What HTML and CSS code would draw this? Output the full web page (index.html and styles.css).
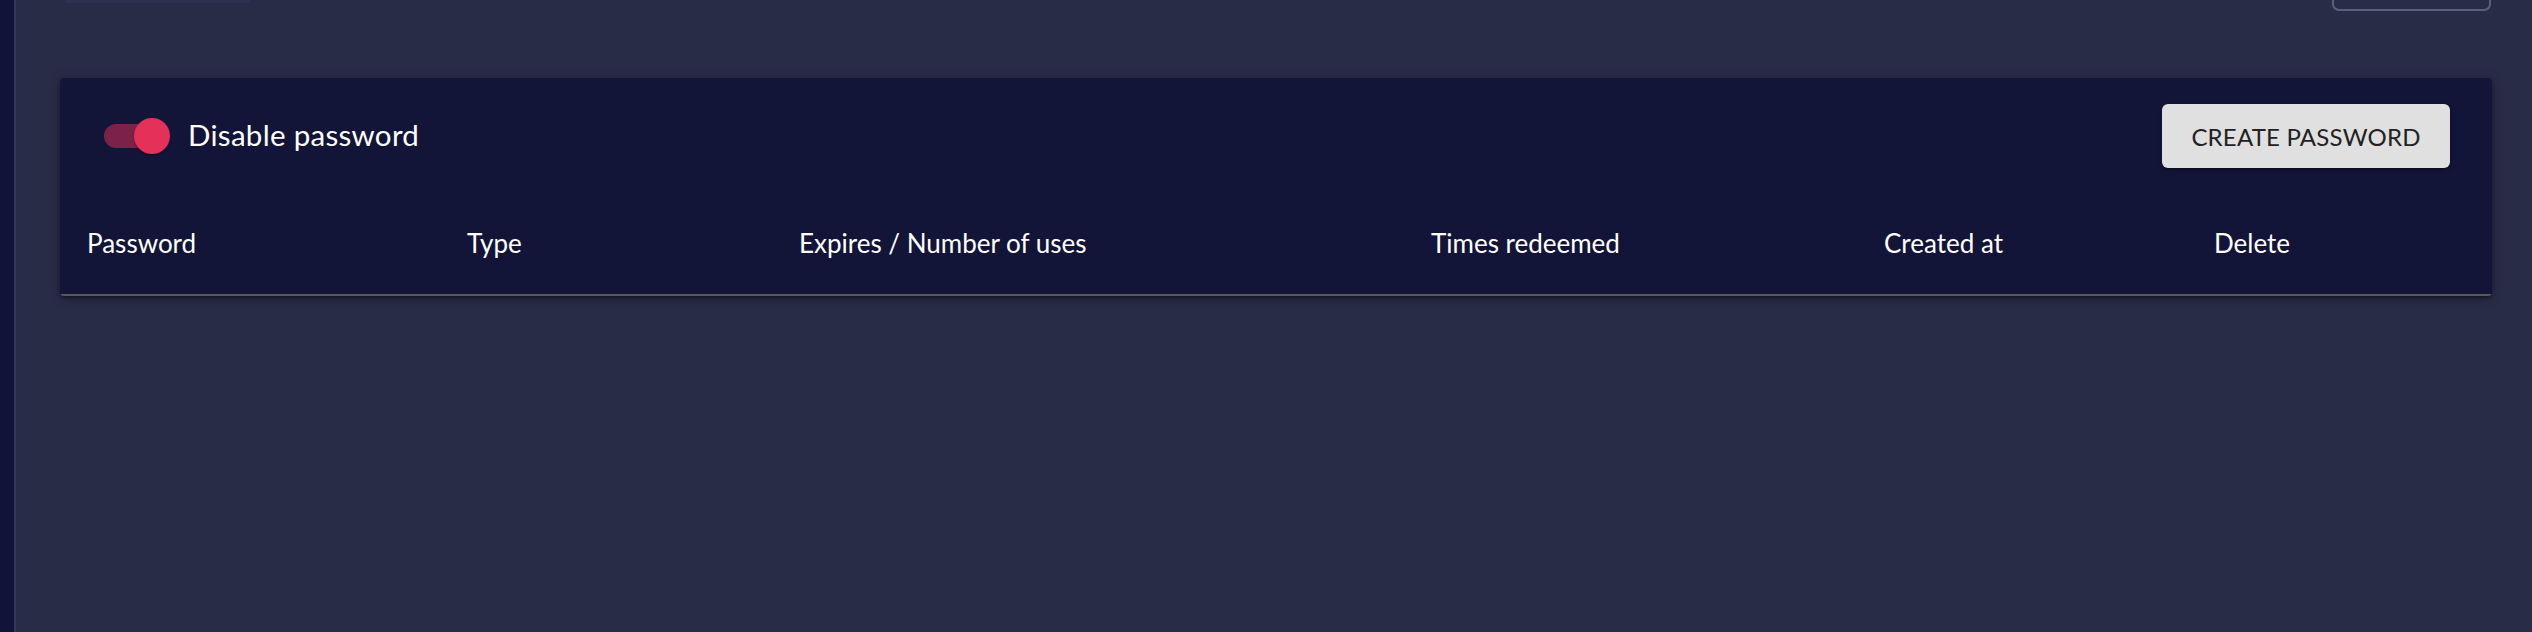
FILE: index.html
```html
<!DOCTYPE html>
<html lang="en">
<head>
<meta charset="utf-8">
<title>Passwords</title>
<link rel="stylesheet" href="styles.css">
</head>
<body>
<div class="app">
  <aside class="sidebar"></aside>
  <main class="main">
    <div class="topbar">
      <div class="title-remnant"></div>
      <div class="outline-btn"></div>
    </div>
    <section class="card">
      <div class="toolbar">
        <label class="switch-label">
          <span class="switch">
            <span class="track"></span>
            <span class="thumb"></span>
          </span>
          <span class="switch-text">Disable password</span>
        </label>
        <button class="create-btn" type="button">CREATE PASSWORD</button>
      </div>
      <div class="thead">
        <div class="th">Password</div>
        <div class="th">Type</div>
        <div class="th">Expires / Number of uses</div>
        <div class="th">Times redeemed</div>
        <div class="th">Created at</div>
        <div class="th">Delete</div>
      </div>
    </section>
  </main>
</div>
</body>
</html>
```

FILE: styles.css
```css
* { box-sizing: border-box; }
html, body {
  margin: 0;
  padding: 0;
  height: 100%;
  background: #292c47;
  font-family: Lato, "Open Sans", "Liberation Sans", sans-serif;
  color: #ffffff;
}
.app {
  display: flex;
  height: 632px;
  overflow: hidden;
}
.sidebar {
  width: 16px;
  flex: 0 0 16px;
  background: #111438;
  border-right: 2px solid #34375a;
}
.main {
  flex: 1;
  padding: 0 40px 0 44px;
  display: flex;
  flex-direction: column;
}
.topbar {
  height: 11px;
  display: flex;
  justify-content: space-between;
  align-items: flex-end;
  overflow: hidden;
}
.title-remnant {
  width: 185px;
  height: 3px;
  margin-left: 5px;
  align-self: flex-start;
  background: #2e3150;
}
.outline-btn {
  width: 159px;
  height: 40px;
  margin-right: 1px;
  flex: 0 0 auto;
  border: 2px solid #5b5f7e;
  border-radius: 7px;
}
.card {
  margin-top: 67px;
  background: #121538;
  border-radius: 4px;
  overflow: hidden;
  box-shadow: 0 3px 3px -2px rgba(0,0,0,0.35), 0 3px 6px 0 rgba(0,0,0,0.25), 0 1px 12px 0 rgba(0,0,0,0.2);
}
.toolbar {
  height: 116px;
  display: flex;
  align-items: center;
  justify-content: space-between;
  padding: 0 42px 0 44px;
}
.switch-label {
  display: flex;
  align-items: center;
  gap: 18px;
}
.switch {
  position: relative;
  width: 66px;
  height: 36px;
  display: block;
}
.track {
  position: absolute;
  left: 0;
  top: 6px;
  width: 61px;
  height: 24px;
  border-radius: 12px;
  background: #7a2248;
}
.thumb {
  position: absolute;
  left: 30px;
  top: 0;
  width: 36px;
  height: 36px;
  border-radius: 50%;
  background: #e3315a;
  box-shadow: 0 2px 2px rgba(0,0,0,0.25);
}
.switch-text {
  font-size: 29.5px;
  line-height: 1;
  color: #ffffff;
  letter-spacing: 0.3px;
  padding-bottom: 2px;
}
.create-btn {
  width: 288px;
  height: 64px;
  background: #e0e0e0;
  color: #222222;
  border: none;
  border-radius: 6px;
  font-family: inherit;
  font-size: 24px;
  letter-spacing: 0.2px;
  box-shadow: 0 3px 2px -2px rgba(0,0,0,0.3), 0 2px 4px rgba(0,0,0,0.25);
}
.thead {
  display: grid;
  grid-template-columns: 380px 332px 632px 453px 330px 1fr;
  height: 102px;
  align-items: center;
  border-bottom: 2px solid #58585c;
  padding-bottom: 3px;
}
.th {
  padding-left: 27px;
  font-size: 26px;
  color: #ffffff;
  white-space: nowrap;
}
```
